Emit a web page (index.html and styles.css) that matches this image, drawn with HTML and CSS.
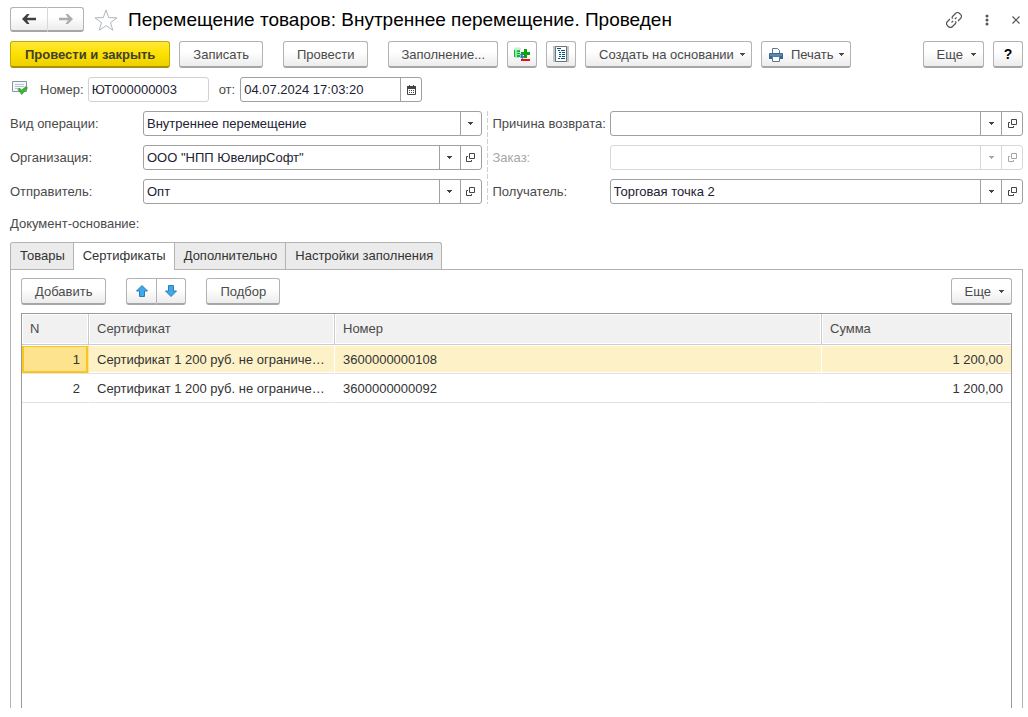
FILE: index.html
```html
<!DOCTYPE html>
<html lang="ru">
<head>
<meta charset="utf-8">
<title>Перемещение товаров</title>
<link rel="stylesheet" href="styles.css">
</head>
<body>
<svg class="defs" aria-hidden="true">
  <symbol id="caret" viewBox="0 0 5 3"><path d="M0 0h5v1H4v1H3v1H2V2H1V1H0z" fill="currentColor"/></symbol>
  <symbol id="open" viewBox="0 0 9 9"><path d="M3.5 .5h5v5h-5zM2 3.5H.5v5h5V7" fill="none" stroke="currentColor"/></symbol>
</svg>
<header class="titlebar">
  <div class="pair nav">
    <button class="btn" aria-label="Назад"><svg width="14" height="10" viewBox="0 0 14 10"><path d="M0 5L5 0h2.500L5 3.700h9v2.600H5L7.500 10H5z" fill="#404040"/></svg></button>
    <button class="btn" aria-label="Вперед"><svg width="14" height="10" viewBox="0 0 14 10"><path d="M14 5L9 0H6.500L9 3.700H0v2.600h9L6.500 10H9z" fill="#adadad"/></svg></button>
  </div>
  <button class="plain star" aria-label="Избранное"><svg width="24" height="22" viewBox="0 0 24 22"><path d="M12 1l2.700 7.600 8.300.2-6.500 4.900 2.300 7.500-6.800-4.500-6.800 4.500 2.300-7.500L1 8.800l8.300-.2z" fill="#fff" stroke="#b0b6bd"/></svg></button>
  <h1 class="title">Перемещение товаров: Внутреннее перемещение. Проведен</h1>
  <div class="window-tools">
    <button class="plain" aria-label="Ссылка"><svg width="16" height="16" viewBox="0 0 16 16" fill="none" stroke="#555" stroke-width="1.200"><path d="M6 5l3.500-3.500a2.900 2.900 0 0 1 4.100 0l.9.900a2.900 2.900 0 0 1 0 4.100L12 9M10 11l-3.500 3.500a2.900 2.900 0 0 1-4.100 0l-.9-.9a2.900 2.900 0 0 1 0-4.100L4 7M5.500 10.500l1.700-1.700M8.800 7.200l1.700-1.700M9 9.500l1.500 1M5.500 5.500L7 6.500"/></svg></button>
    <button class="plain" aria-label="Меню"><svg width="4" height="12" viewBox="0 0 4 12" fill="#555"><circle cx="2" cy="2" r="1.500"/><circle cx="2" cy="6" r="1.500"/><circle cx="2" cy="10" r="1.500"/></svg></button>
    <button class="plain" aria-label="Закрыть"><svg width="8" height="8" viewBox="0 0 8 8"><path d="M.5.5l7 7M7.500.5l-7 7" stroke="#555" stroke-width="1.200"/></svg></button>
  </div>
</header>

<div class="toolbar">
  <button class="btn primary">Провести и закрыть</button>
  <button class="btn">Записать</button>
  <button class="btn apart">Провести</button>
  <button class="btn apart fill">Заполнение...</button>
  <button class="btn icon" aria-label="Изменить"><svg width="16" height="15" viewBox="0 0 16 15"><path d="M0 2h6v8l-3 1-3-1z" fill="#8fe8a4"/><path d="M0 3h1v7H0zM3 3h3v2H3zM3 6h3v1H3zM3 8h3v2H3z" fill="#16ad40"/><ellipse cx="3.500" cy="1.700" rx="3.500" ry="1.500" fill="#c2f4c8"/><path d="M10 2h3v3h3v3h-3v3h-3V8H7V5h3z" fill="#10a010"/><path d="M6 7h2l1 2h2l-2.500 3L5 9.500h2z" fill="#2384bd"/><path d="M7 12h9v2H7z" fill="#f40b0b"/></svg></button>
  <button class="btn icon" aria-label="Движения документа"><svg width="16" height="16" viewBox="0 0 16 16" fill="none"><path d="M0 0h16v16H0z" fill="#c3c6c9"/><path d="M2.500.5h11v15h-11z" fill="#fff" stroke="#6b747b"/><path d="M4 2.500h4M5 4.500h2M8 4.500h4M6 6.500h2M9 6.500h3M6 8.500h2M9 8.500h3M6 10.500h2M9 10.500h3M5 12.500h2M8 12.500h4" stroke="#00557f"/></svg></button>
  <button class="btn menu">Создать на основании <svg class="caret"><use href="#caret"/></svg></button>
  <button class="btn menu print"><svg width="14" height="14" viewBox="0 0 14 14"><path d="M3.500 5V.5h5l2 2V5" fill="#fff" stroke="#5c7892"/><path d="M0 6q0-1 1-1h12q1 0 1 1v5H0z" fill="#386894"/><path d="M1 7h12" stroke="#83a9ca"/><path d="M3.500 8.500h7v5h-7z" fill="#fff" stroke="#5c7892"/></svg>Печать <svg class="caret"><use href="#caret"/></svg></button>
  <button class="btn menu push">Еще <svg class="caret"><use href="#caret"/></svg></button>
  <button class="btn icon help">?</button>
</div>

<div class="docline">
  <svg class="status" width="16" height="14" viewBox="0 0 16 14"><path d="M.5.500h14v10H.5z" fill="#f5f8fb" stroke="#8296aa"/><path d="M3 3.500h9M3 5.500h9M3 7.500h5" stroke="#b7c5d2"/><path d="M6 8.500L7.500 7l2.200 2.200L14 5.500l1.500 1.500-5.800 6.500z" fill="#3fb535" stroke="#23861e" stroke-width=".6"/></svg>
  <label for="num">Номер:</label>
  <div class="field number"><input id="num" value="ЮТ000000003"></div>
  <label for="date">от:</label>
  <div class="field date"><input id="date" value="04.07.2024 17:03:20"><button aria-label="Календарь"><svg width="9" height="10" viewBox="0 0 9 10"><path d="M.5 2.500h8v7h-8z" fill="#fff" stroke="#444"/><path d="M0 1h9v3H0zM2 0h1v2H2zM6 0h1v2H6z" fill="#444"/><path d="M2 5.500h5.500M2 7.500h5.500" stroke="#444" stroke-dasharray="1 1"/></svg></button></div>
</div>

<div class="form">
  <div class="column">
    <div class="row"><label for="op">Вид операции:</label><div class="field"><input id="op" value="Внутреннее перемещение"><button aria-label="Выбрать"><svg class="caret"><use href="#caret"/></svg></button></div></div>
    <div class="row"><label for="org">Организация:</label><div class="field"><input id="org" value="ООО &quot;НПП ЮвелирСофт&quot;"><button aria-label="Выбрать"><svg class="caret"><use href="#caret"/></svg></button><button aria-label="Открыть"><svg class="open"><use href="#open"/></svg></button></div></div>
    <div class="row"><label for="from">Отправитель:</label><div class="field"><input id="from" value="Опт"><button aria-label="Выбрать"><svg class="caret"><use href="#caret"/></svg></button><button aria-label="Открыть"><svg class="open"><use href="#open"/></svg></button></div></div>
  </div>
  <div class="divider"></div>
  <div class="column right">
    <div class="row"><label for="why">Причина возврата:</label><div class="field"><input id="why"><button aria-label="Выбрать"><svg class="caret"><use href="#caret"/></svg></button><button aria-label="Открыть"><svg class="open"><use href="#open"/></svg></button></div></div>
    <div class="row off"><label for="order">Заказ:</label><div class="field"><input id="order" disabled><button disabled aria-label="Выбрать"><svg class="caret"><use href="#caret"/></svg></button><button disabled aria-label="Открыть"><svg class="open"><use href="#open"/></svg></button></div></div>
    <div class="row"><label for="to">Получатель:</label><div class="field"><input id="to" value="Торговая точка 2"><button aria-label="Выбрать"><svg class="caret"><use href="#caret"/></svg></button><button aria-label="Открыть"><svg class="open"><use href="#open"/></svg></button></div></div>
  </div>
</div>
<div class="basis">Документ-основание:</div>

<div class="tabs" role="tablist">
  <button class="tab" role="tab">Товары</button>
  <button class="tab active" role="tab" aria-selected="true">Сертификаты</button>
  <button class="tab" role="tab">Дополнительно</button>
  <button class="tab" role="tab">Настройки заполнения</button>
</div>
<main class="panel">
  <div class="toolbar inner">
    <button class="btn">Добавить</button>
    <div class="pair move">
      <button class="btn" aria-label="Вверх"><svg width="12" height="12" viewBox="0 0 12 12"><path d="M6 .5l5.500 5.500H8.500v5.500h-5V6H.5z" fill="#3fa9ec" stroke="#2b7fb5"/></svg></button>
      <button class="btn" aria-label="Вниз"><svg width="12" height="12" viewBox="0 0 12 12"><path d="M6 11.500L.5 6h3V.5h5V6h3z" fill="#3fa9ec" stroke="#2b7fb5"/></svg></button>
    </div>
    <button class="btn">Подбор</button>
    <button class="btn menu push">Еще <svg class="caret"><use href="#caret"/></svg></button>
  </div>
  <div class="grid">
    <table>
      <colgroup><col class="c-n"><col class="c-cert"><col><col class="c-sum"></colgroup>
      <thead><tr><th>N</th><th>Сертификат</th><th>Номер</th><th>Сумма</th></tr></thead>
      <tbody>
        <tr class="selected"><td class="num current">1</td><td>Сертификат 1 200 руб. не ограниче…</td><td>3600000000108</td><td class="num">1 200,00</td></tr>
        <tr><td class="num">2</td><td>Сертификат 1 200 руб. не ограниче…</td><td>3600000000092</td><td class="num">1 200,00</td></tr>
      </tbody>
    </table>
  </div>
</main>
</body>
</html>
```
FILE: styles.css
```css
* { box-sizing: border-box; }
body {
  margin: 0;
  min-height: 100vh;
  padding: 7px 5px 9px 10px;
  display: flex;
  flex-direction: column;
  background: #fff;
  color: #4a4a4a;
  font: 13px/16px "Liberation Sans", Arial, sans-serif;
}
button, input { font: inherit; color: inherit; margin: 0; }
svg { display: block; flex: none; }
.defs { position: absolute; width: 0; height: 0; }
.caret { width: 5px; height: 3px; }
.open { width: 9px; height: 9px; }

.btn {
  display: flex;
  align-items: center;
  justify-content: center;
  height: 27px;
  padding: 1px 13px 0;
  border: 1px solid #b3b3b3;
  border-bottom: 2px solid #a6a6a6;
  border-radius: 3px;
  background: linear-gradient(#fff 40%, #ececec);
  white-space: nowrap;
}
.plain { display: flex; padding: 0; border: 0; background: none; }
.pair { display: flex; }
.pair .btn { padding: 0; }
.pair .btn:first-child { border-radius: 3px 0 0 3px; border-right: 0; }
.pair .btn:last-child { border-radius: 0 3px 3px 0; }

.titlebar { display: flex; align-items: center; height: 25px; }
.nav .btn { width: 37px; height: 25px; }
.nav .btn:last-child { border-left-color: #d8d8d8; }
.star { margin: 0 10px; }
.title { margin: 0; color: #000; font-size: 19px; line-height: 24px; font-weight: 400; white-space: nowrap; }
.window-tools { display: flex; align-items: center; gap: 23px; margin-left: auto; padding-right: 3px; }

.toolbar { display: flex; gap: 9px; margin-top: 9px; }
.primary {
  padding: 1px 14px 0;
  font-weight: 700;
  color: #404030;
  border-color: #c2a800;
  border-bottom-color: #a99200;
  background: linear-gradient(#ffe838, #fde000 50%, #ecd000);
}
.apart { margin-left: 11px; }
.fill { padding: 1px 12px 0; }
.icon { width: 30px; padding: 0; }
.menu { gap: 6px; padding-right: 6px; }
.print { padding-left: 7px; }
.print svg:first-child { margin-right: 2px; }
.push { margin-left: auto; gap: 8px; padding-right: 7px; }
.help { color: #000; font-size: 14px; font-weight: 700; }

.docline { display: flex; align-items: center; margin-top: 9px; }
.status { margin: 0 12px 4px 2px; }
.field { display: flex; height: 25px; border: 1px solid #a0a0a0; border-radius: 3px; flex: 1; min-width: 0; }
.field input { flex: 1; min-width: 0; width: 0; padding: 0 3px; border: 0; background: none; outline: 0; color: #222233; }
.field button { display: flex; align-items: center; justify-content: center; width: 21px; padding: 0; border: 0; border-left: 1px solid #a0a0a0; background: none; color: #444; }
.number { flex: 0 0 121px; margin: 0 10px 0 4px; border-color: #d2d2d2; }
.date { flex: 0 0 182px; margin-left: 5px; }

.form { display: grid; grid-template-columns: 8fr 1px 9fr; column-gap: 5px; margin-top: 9px; }
.column { display: grid; gap: 9px; min-width: 0; }
.row { display: flex; align-items: center; }
.row label { flex: 0 0 133px; white-space: nowrap; }
.right .row label { flex-basis: 117px; }
.divider { background: repeating-linear-gradient(#d0d0d0 0 5px, transparent 5px 7px); }
.off label { color: #a6a6a6; }
.off .field, .off .field button { border-color: #d8d8d8; color: #a6a6a6; }
.basis { margin-top: 12px; }

.tabs { display: flex; margin-top: 10px; position: relative; }
.tab { height: 27px; padding: 0 8px 0 9px; border: 1px solid #b3b3b3; border-left-width: 0; border-bottom: 0; background: #ebebeb; color: #333; white-space: nowrap; }
.tab:first-child { border-left-width: 1px; border-radius: 3px 0 0 0; }
.tab:last-child { border-radius: 0 3px 0 0; }
.tab.active { height: 28px; margin-bottom: -1px; padding-bottom: 1px; background: #fff; }
.panel { flex: 1; display: flex; flex-direction: column; border: 1px solid #b3b3b3; border-bottom: 0; padding: 8px 10px 0; }
.inner { margin: 0 0 8px; gap: 20px; }
.move .btn { width: 30px; }
.grid { flex: 1; border: 1px solid #999; border-bottom: 0; }
table { width: 100%; table-layout: fixed; border-collapse: separate; border-spacing: 0; }
.c-n { width: 67px; }
.c-cert { width: 246px; }
.c-sum { width: 189px; }
th, td { padding: 0 8px; text-align: left; font-weight: 400; white-space: nowrap; overflow: hidden; }
th { height: 31px; background: #f1f1f1; border-right: 1px solid #ccc; border-bottom: 1px solid #ccc; box-shadow: inset 0 0 0 1px #fff; }
th:last-child, td:last-child { border-right: 0; }
td { height: 29px; padding-top: 1px; color: #333; border-right: 1px solid transparent; border-bottom: 1px solid #e2e2e2; }
.num { text-align: right; }
.selected td { background: #fdf1c7; background-clip: padding-box; box-shadow: inset 0 1px #fff, inset 0 -1px #fff; }
.selected .current { background: #fde38e; box-shadow: inset 0 1px #fff, inset 0 0 0 2px #f8c620; }
```
